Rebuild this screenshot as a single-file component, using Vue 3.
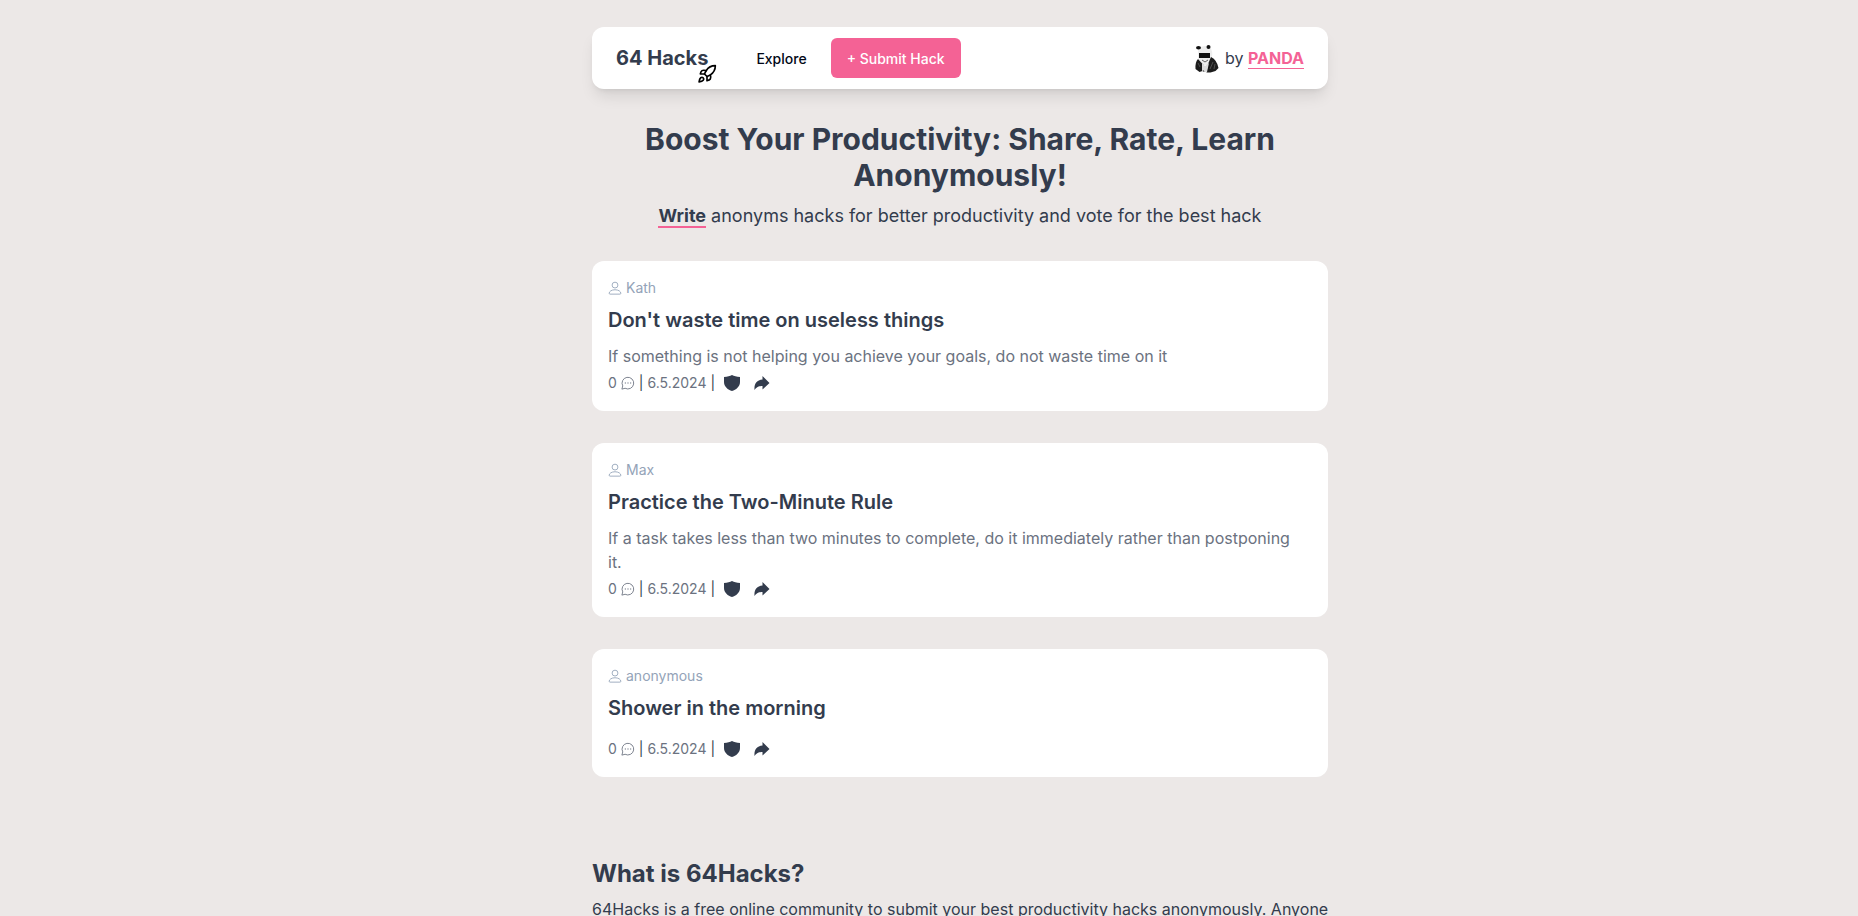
<template>
  <div class="page">
    <div class="container">
      <header class="navbar">
        <a href="#" class="brand">
          64 Hacks
          <svg class="rocket" viewBox="0 0 24 24" aria-hidden="true">
            <path d="M4.5 16.5c-1.5 1.26-2 5-2 5s3.74-.5 5-2c.71-.84.7-2.13-.09-2.91a2.18 2.18 0 0 0-2.91-.09z" />
            <path d="m12 15-3-3a22 22 0 0 1 2-3.95A12.88 12.88 0 0 1 22 2c0 2.72-.78 7.5-6 11a22.35 22.35 0 0 1-4 2z" />
            <path d="M9 12H4s.55-3.03 2-4c1.62-1.08 5 0 5 0" />
            <path d="M12 15v5s3.03-.55 4-2c1.08-1.62 0-5 0-5" />
          </svg>
        </a>
        <nav class="nav">
          <a href="#" class="nav-link">Explore</a>
          <button type="button" class="submit">+ Submit Hack</button>
        </nav>
        <div class="author">
          <svg class="panda" viewBox="0 0 26 30" aria-hidden="true">
            <path d="M4 6Q9 1 16 4q3 4 2 10l-4 8H8l-4-7z" fill="#eeeeee" />
            <ellipse cx="4.5" cy="4.700" rx="2.500" ry="1.800" fill="#111" />
            <ellipse cx="14.500" cy="4" rx="2" ry="2" fill="#111" />
            <path d="M4 16Q1 19 1.500 26l4 3 3-1 1-6z" fill="#1c1c1c" />
            <path d="M17 14q6 3 7.500 11l-3 3-5 1.500h-4L14 21z" fill="#1c1c1c" />
            <path d="m8 20 3 3 4-3-2 9H8z" fill="#dcdcdc" />
            <rect x="5" y="10" width="11" height="5" fill="#111" />
            <path d="m8 17 3 2 3-2M9 27l1 2" fill="none" stroke="#666" />
            <path d="m4 20 2 4m13-5-3 7m5-5-1 5" fill="none" stroke="#5a5a5a" stroke-width="0.8" />
          </svg>
          <span>by <a href="#" class="author-link">PANDA</a></span>
        </div>
      </header>

      <main>
        <section class="hero">
          <h1>Boost Your Productivity: Share, Rate, Learn Anonymously!</h1>
          <p><a href="#" class="write">Write</a> anonyms hacks for better productivity and vote for the best hack</p>
        </section>

        <section class="hacks">
          <article v-for="hack in hacks" :key="hack.title" class="card">
            <div class="card-user">
              <svg class="icon-user" viewBox="0 0 24 24" aria-hidden="true">
                <circle cx="12" cy="7" r="5" />
                <path d="M2 21c0-3 4-6 10-6s10 3 10 6c0 1-.5 1.500-1.500 1.500h-17C2.500 22.500 2 22 2 21z" />
              </svg>
              {{ hack.user }}
            </div>
            <h2>{{ hack.title }}</h2>
            <p class="card-text">{{ hack.text }}</p>
            <div class="card-meta">
              <span>{{ hack.comments }}</span>
              <svg class="icon-comment" viewBox="0 0 24 24" aria-hidden="true">
                <path d="M1.500 22.500 3 17A10 10 0 1 1 7 21z" />
                <path d="M6.500 12h2M11 12h2M15.500 12h2" class="dots" />
              </svg>
              <span class="sep">|</span>
              <span>{{ hack.date }}</span>
              <span class="sep">|</span>
              <button type="button" class="icon-btn" aria-label="Report">
                <svg viewBox="0 0 16 16" aria-hidden="true">
                  <path d="M8 0C6 1.200 3.500 1.500 0 2v5c0 4.500 4 8 8 9 4-1 8-4.500 8-9V2C12.500 1.500 10 1.200 8 0z" />
                </svg>
              </button>
              <button type="button" class="icon-btn" aria-label="Share">
                <svg viewBox="0 0 16 16" aria-hidden="true">
                  <path d="M8.500 1 15.500 8l-7 6.500V11c-3.500 0-5.500.5-8 4C0 9 2.500 5 8.500 4.500z" />
                </svg>
              </button>
            </div>
          </article>
        </section>

        <section class="about">
          <h2>What is 64Hacks?</h2>
          <p>64Hacks is a free online community to submit your best productivity hacks anonymously. Anyone</p>
        </section>
      </main>
    </div>
  </div>
</template>

<script setup>
const hacks = [
  {
    user: 'Kath',
    title: "Don't waste time on useless things",
    text: 'If something is not helping you achieve your goals, do not waste time on it',
    comments: 0,
    date: '6.5.2024',
  },
  {
    user: 'Max',
    title: 'Practice the Two-Minute Rule',
    text: 'If a task takes less than two minutes to complete, do it immediately rather than postponing it.',
    comments: 0,
    date: '6.5.2024',
  },
  {
    user: 'anonymous',
    title: 'Shower in the morning',
    text: '',
    comments: 0,
    date: '6.5.2024',
  },
]
</script>

<style>
body {
  margin: 0;
  background: #ece8e7;
}
</style>

<style scoped>
.page {
  padding: 27px 0 0 62px;
  font-family: Inter, sans-serif;
  font-size: 16px;
  line-height: 24px;
  color: #333c4d;
}

.container {
  max-width: 736px;
  margin: 0 auto;
}

h1, h2, p { margin: 0; }

a {
  color: inherit;
  text-decoration: none;
}

button {
  padding: 0;
  border: 0;
  font-family: inherit;
  cursor: pointer;
}

svg { flex-shrink: 0; }

.navbar {
  display: flex;
  align-items: center;
  padding: 11px 24px;
  border-radius: 12px;
  background: #fff;
  box-shadow: 0 10px 15px -3px rgba(0, 0, 0, 0.1), 0 4px 6px -4px rgba(0, 0, 0, 0.1);
}

.brand {
  position: relative;
  font-size: 20px;
  line-height: 28px;
  font-weight: 700;
}

.rocket {
  position: absolute;
  right: -9px;
  bottom: -12px;
  width: 20px;
  height: 20px;
  fill: none;
  stroke: #000;
  stroke-width: 2;
  stroke-linecap: round;
  stroke-linejoin: round;
}

.nav {
  display: flex;
  align-items: center;
  gap: 24px;
  margin-left: 48px;
  font-size: 14px;
  font-weight: 500;
}

.nav-link {
  padding-top: 2px;
  color: #020817;
}

.submit {
  height: 40px;
  padding: 0 16px;
  border-radius: 6px;
  background: #f46295;
  color: #fff;
  font-size: 14px;
  font-weight: 500;
}

.author {
  display: flex;
  align-items: center;
  gap: 5px;
  margin-left: auto;
}

.panda {
  width: 26px;
  height: 30px;
}

.author-link {
  border-bottom: 1px solid #f46295;
  color: #f46295;
  font-weight: 700;
}

.hero {
  margin-top: 32px;
  text-align: center;
}

.hero h1 {
  font-size: 30px;
  line-height: 36px;
  font-weight: 700;
}

.hero p {
  margin-top: 9px;
  font-size: 18px;
  line-height: 28px;
}

.write {
  border-bottom: 2px solid #f46295;
  font-weight: 700;
}

.hacks {
  display: flex;
  flex-direction: column;
  gap: 32px;
  margin-top: 31px;
}

.card {
  padding: 16px 16px 13px;
  border-radius: 12px;
  background: #fff;
}

.card-user {
  display: flex;
  align-items: center;
  gap: 4px;
  font-size: 14px;
  line-height: 22px;
  color: #94a3b8;
}

.icon-user {
  width: 14px;
  height: 14px;
  fill: none;
  stroke: currentColor;
  stroke-width: 1.5;
}

.card h2 {
  margin: 7px 0 10px;
  font-size: 20px;
  line-height: 28px;
  font-weight: 600;
}

.card-text {
  min-height: 2px;
  padding-right: 8px;
  color: #6b7280;
}

.card-meta {
  display: flex;
  align-items: center;
  height: 30px;
  gap: 4px;
  font-size: 14px;
  color: #6b7280;
}

.icon-comment {
  width: 14px;
  height: 14px;
  fill: none;
  stroke: currentColor;
  stroke-width: 1.5;
}

.dots { stroke-width: 2; }

.sep { color: #333c4d; }

.icon-btn {
  display: flex;
  margin-left: 5px;
  background: none;
}

.icon-btn + .icon-btn { margin-left: 10px; }

.icon-btn svg {
  width: 16px;
  height: 16px;
  fill: #333c4d;
}

.about { margin-top: 81px; }

.about h2 {
  font-size: 24px;
  line-height: 32px;
  font-weight: 700;
}

.about p {
  margin-top: 7px;
  margin-right: -8px;
}
</style>
